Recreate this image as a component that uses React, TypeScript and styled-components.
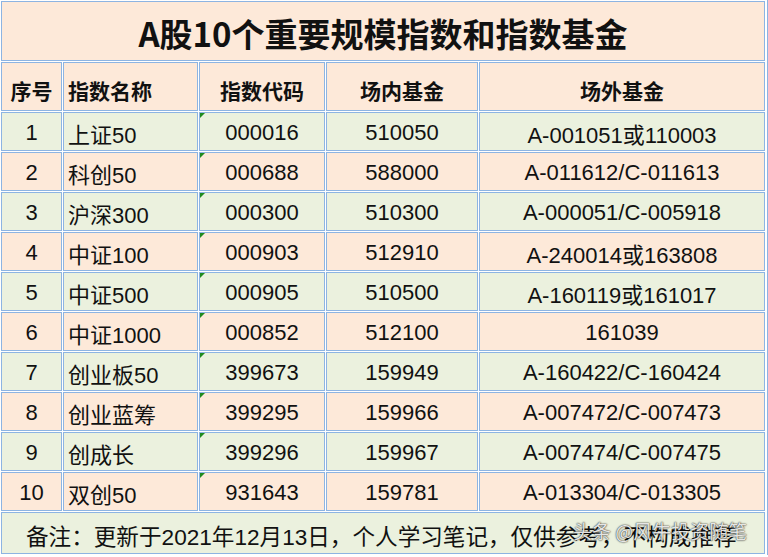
import * as React from "react";
import styled, { createGlobalStyle } from "styled-components";

const palette = {
  peach: "#fde9d9",
  green: "#ebf1de",
  line: "#8db4e2",
  text: "#111111",
  mark: "#1f8a1f",
};

const GlobalStyle = createGlobalStyle`
  html, body {
    margin: 0;
    padding: 0;
    background: #ffffff;
  }
`;

const Sheet = styled("div")({
  position: "relative",
  width: "fit-content",
  display: "grid",
  gridTemplateColumns: "61px 135px 126px 152px 286px",
  gridTemplateRows: "60px 49px repeat(10, 39px) 42px",
  gap: 1,
  padding: "1px 2px 1px 1px",
  borderRight: `1px solid ${palette.line}`,
  fontFamily: '"Liberation Sans", "Noto Sans CJK SC", sans-serif',
  color: palette.text,
});

const Cell = styled("div")<{ $bg: "peach" | "green"; $align?: "left" | "center" }>(
  (p) => ({
    position: "relative",
    boxSizing: "border-box",
    border: `1px solid ${palette.line}`,
    background: p.$bg === "peach" ? palette.peach : palette.green,
    display: "flex",
    alignItems: "center",
    justifyContent: p.$align === "left" ? "flex-start" : "center",
    paddingLeft: p.$align === "left" ? 4 : 0,
    paddingTop: 3,
    fontSize: 22,
    whiteSpace: "nowrap",
    overflow: "hidden",
  })
);

const Title = styled(Cell)({
  gridColumn: "1 / -1",
  fontFamily: '"Noto Sans CJK SC", sans-serif',
  fontWeight: 700,
  fontSize: 33,
  paddingTop: 4,
});

const HeadCell = styled(Cell)({
  fontFamily: '"Noto Sans CJK SC", sans-serif',
  fontWeight: 700,
  fontSize: 21,
  paddingTop: 6,
});

const CodeCell = styled(Cell)({
  "&::before": {
    content: '""',
    position: "absolute",
    left: 0,
    top: 0,
    width: 0,
    height: 0,
    borderTop: `5px solid ${palette.mark}`,
    borderRight: "5px solid transparent",
  },
});

const Footer = styled(Cell)({
  gridColumn: "1 / -1",
  paddingLeft: 24,
  paddingTop: 5,
  fontSize: 22.6,
});

const Watermark = styled("div")({
  position: "absolute",
  left: 573,
  top: 517,
  fontFamily: '"Noto Sans CJK SC", sans-serif',
  fontSize: 19,
  color: "rgba(255,255,255,0.88)",
  textShadow: "0 0 2px rgba(0,0,0,0.7), 0 0 1px rgba(0,0,0,0.7)",
  whiteSpace: "nowrap",
  pointerEvents: "none",
});

const rows = [
  ["1", "上证50", "000016", "510050", "A-001051或110003"],
  ["2", "科创50", "000688", "588000", "A-011612/C-011613"],
  ["3", "沪深300", "000300", "510300", "A-000051/C-005918"],
  ["4", "中证100", "000903", "512910", "A-240014或163808"],
  ["5", "中证500", "000905", "510500", "A-160119或161017"],
  ["6", "中证1000", "000852", "512100", "161039"],
  ["7", "创业板50", "399673", "159949", "A-160422/C-160424"],
  ["8", "创业蓝筹", "399295", "159966", "A-007472/C-007473"],
  ["9", "创成长", "399296", "159967", "A-007474/C-007475"],
  ["10", "双创50", "931643", "159781", "A-013304/C-013305"],
];

const heads = ["序号", "指数名称", "指数代码", "场内基金", "场外基金"];

export default function App() {
  return (
    <>
      <GlobalStyle />
      <Sheet>
        <Title $bg="peach">A股10个重要规模指数和指数基金</Title>
        {heads.map((h, i) => (
          <HeadCell key={h} $bg="peach" $align={i === 1 ? "left" : "center"}>
            {h}
          </HeadCell>
        ))}
        {rows.map((r, idx) => {
          const bg = idx % 2 === 0 ? "green" : "peach";
          return (
            <React.Fragment key={r[0]}>
              <Cell $bg={bg}>{r[0]}</Cell>
              <Cell $bg={bg} $align="left">
                {r[1]}
              </Cell>
              <CodeCell $bg={bg}>{r[2]}</CodeCell>
              <Cell $bg={bg}>{r[3]}</Cell>
              <Cell $bg={bg}>{r[4]}</Cell>
            </React.Fragment>
          );
        })}
        <Footer $bg="green" $align="left">
          备注：更新于2021年12月13日，个人学习笔记，仅供参考，不构成推荐
        </Footer>
        <Watermark>头条 @风牛投资随笔</Watermark>
      </Sheet>
    </>
  );
}
